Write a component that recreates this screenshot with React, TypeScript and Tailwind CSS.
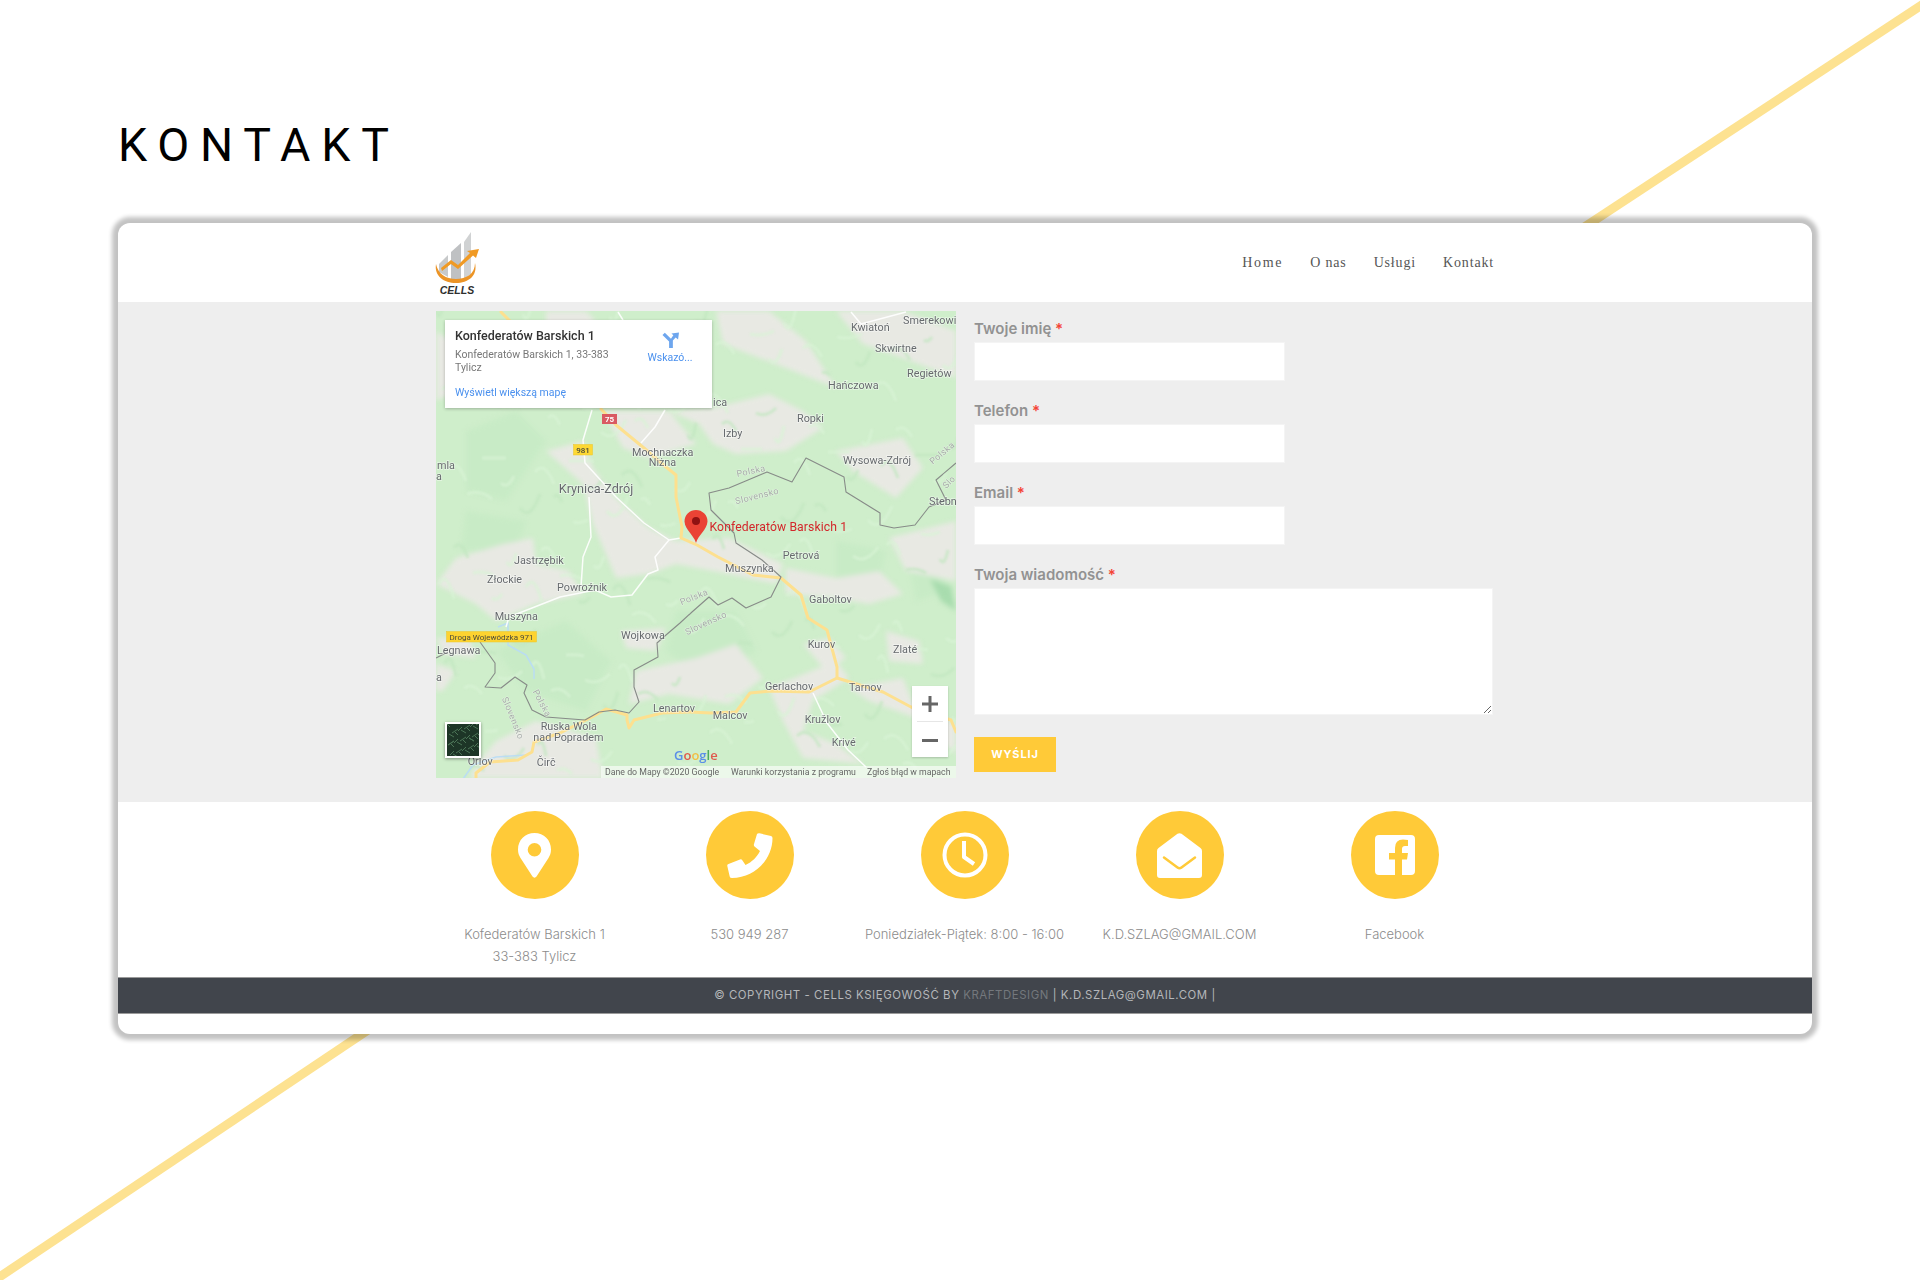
import type { ReactNode } from 'react';

const mont = 'font-["Inter",sans-serif]';

// map labels: text, x, y (centre line), size
const labels: [string, number, number, number?][] = [
  ['Smerekowi', 467, 8],
  ['Kwiatoń', 415, 15.7],
  ['Skwirtne', 439, 36],
  ['Regietów', 471, 61.7],
  ['Hańczowa', 392, 73],
  ['Ropki', 361, 106.7],
  ['Izby', 287, 121],
  ['ica', 277, 90.7],
  ['Wysowa-Zdrój', 407, 148],
  ['Mochnaczka', 196, 140],
  ['Niżna', 212.7, 150.7],
  ['mla', 1, 153],
  ['a', 0, 164],
  ['Krynica-Zdrój', 122.7, 176.7, 12.7],
  ['Stebn', 493, 189],
  ['Jastrzębik', 78, 248],
  ['Złockie', 51, 267.7],
  ['Powroźnik', 121, 275],
  ['Petrová', 346.7, 243],
  ['Muszynka', 289, 256.7],
  ['Gaboltov', 373, 287],
  ['Muszyna', 58.7, 304],
  ['Wojkowa', 185, 323],
  ['Legnawa', 1, 338.7],
  ['Kurov', 371.7, 332],
  ['Zlaté', 457, 337.7],
  ['a', 0, 365],
  ['Gerlachov', 329, 374.7],
  ['Tarnov', 413, 375.7],
  ['Lenartov', 217, 396],
  ['Malcov', 276.7, 403.7],
  ['Kružlov', 368.7, 407],
  ['Ruska Wola', 104.7, 414.3],
  ['nad Popradem', 97.3, 425],
  ['Krivé', 395.7, 430],
  ['Čirč', 100.7, 450],
  ['Orlov', 31.7, 449],
];

// rotated border captions
const borderLabels: [string, number, number, number][] = [
  ['Polska', 315, 159, -12],
  ['Slovensko', 321, 184, -14],
  ['Polska', 506, 141, -40],
  ['Slo', 513, 170, -45],
  ['Polska', 258, 285, -22],
  ['Slovensko', 270, 311, -25],
  ['Polska', 106, 391, 62],
  ['Slovensko', 77, 406, 68],
];

const greyPatches = [
  '277,97 333,83 367,100 387,117 350,140 300,143 277,133 263,113 233,100',
  '167,100 233,100 260,133 213,147 187,137',
  '110,140 147,130 157,157 180,187 213,217 240,230 293,227 347,253 340,273 293,263 240,253 213,263 180,267 157,213 147,173',
  '0,273 20,247 67,233 97,227 100,253 133,260 147,283 100,293 60,310 40,293',
  '350,257 400,267 443,260 467,283 433,293 400,287 350,283',
  '400,140 467,127 487,157 460,187 417,160',
  '400,0 467,0 520,20 520,67 467,47 427,33',
  '200,360 260,347 300,333 327,367 293,393 233,383 193,393',
  '333,377 400,350 413,367 377,390 367,420 400,433 427,453 367,447 347,410',
  '43,450 60,430 100,410 160,427 167,467 33,467',
  '367,333 393,327 410,347 390,360',
  '185,320 230,317 220,340 190,337',
  '450,320 483,330 487,353 453,350',
  '0,353 20,360 7,380 0,380',
  '0,327 33,327 40,347 7,343',
  '413,377 467,367 477,393 520,413 520,443 480,407 433,390',
  '280,0 333,0 370,30 400,77 350,57 287,33',
  '453,227 520,210 520,270 470,260',
  '0,20 30,40 20,80 0,90',
  '110,30 160,10 150,0 110,0',
];

const greenPatches = [
  '30,120 80,100 110,130 70,190 30,180',
  '60,340 130,310 175,350 150,400 90,380',
  '240,300 300,300 320,340 270,370 230,340',
  '470,240 500,220 510,280 480,290',
  '400,230 450,240 440,290 400,290',
  '30,200 90,210 80,240 25,240',
];

// fake terrain streaks so the hills don't read as flat blobs
const ridges = Array.from({ length: 150 }, (_, i) => {
  const x = (i * 137) % 520;
  const y = (i * 211) % 467;
  const dx = 8 + ((i * 7) % 18);
  const dy = ((i * 13) % 31) - 15;
  return { d: `M${x} ${y} q${dx / 2} ${-dy} ${dx} ${dy}`, light: i % 3 !== 0 };
});

const thumbStrokes = Array.from({ length: 36 }, (_, i) => {
  const x = (i * 11) % 32;
  const y = (i * 7) % 32;
  return `M${x} ${y} l${3 + (i % 4)} ${i % 2 ? -4 : 3}`;
}).join(' ');

function MapCanvas() {
  return (
    <svg viewBox="0 0 520 467" className="absolute inset-0 h-full w-full">
      <rect width="520" height="467" fill="#cfeecb" />
      <g className="blur-[2.5px]">
        {greenPatches.map((p, i) => (
          <polygon key={i} points={p} fill="#c8ebc6" />
        ))}
        {greyPatches.map((p, i) => (
          <polygon key={i} points={p} fill="#e8e9e3" />
        ))}
        <path d="M494 268 L515 275 L520 300 L505 290Z" fill="#a8dcae" />
      </g>
      <g fill="none" strokeWidth="3" className="blur-[1px]">
        {ridges.map((r, i) => (
          <path key={i} d={r.d} stroke={r.light ? '#d9f3d5' : '#c2e7c0'} opacity="0.7" />
        ))}
      </g>
      <g className="blur-[0.4px]" transform="translate(0 1)">
        {/* rivers */}
        <g fill="none" stroke="#b9dcf5" strokeWidth="1.6" opacity="0.9" strokeLinejoin="round">
          <path d="M62 315 L72 311 L72 333 L90 343 L98 357 L98 367" />
          <path d="M27 467 L37 453 L60 445 L90 443" />
        </g>
        {/* minor roads */}
        <g fill="none" stroke="#ffffff" strokeWidth="1.5" strokeLinejoin="round" opacity="0.9">
          <path d="M156 98 L147 128 L149 151 L180 185 L208 211 L233 228 L245 226" />
          <path d="M229 98 L219 115 L205 131" />
          <path d="M233 228 L219 245 L222 258 L212 262 L196 283 L175 285 L159 278 L124 285 L96 296 L73 305 L70 315" />
          <path d="M153 185 L155 225 L147 245 L145 275" />
          <path d="M377 381 L391 411 L412 438 L430 455" />
          <path d="M182 0 L187 8 M415 0 L425 12 L470 0" />
        </g>
        {/* main roads */}
        <g fill="none" stroke="#fde08f" strokeWidth="3" strokeLinejoin="round" strokeLinecap="round">
          <path d="M65 0 L75 10" />
          <path d="M165 97 L180 113 L208 136 L230 155 L240 163 L240 185 L246 215 L245 226 L261 233 L282 245 L317 263 L345 266 L365 283 L372 306 L391 318 L401 355 L401 366 L373 380 L335 379 L314 381 L300 400 L275 401 L254 400 L226 401 L198 408 L193 416 L191 408 L191 403 L170 397 L156 405 L124 421 L98 430 L96 440 L82 448 L54 450 L40 461 L40 467" />
          <path d="M401 366 L447 380 L475 395 L515 408 L520 420" />
        </g>
        {/* country border */}
        <g fill="none" stroke="#878b88" strokeWidth="1.1" strokeLinejoin="round">
          <path d="M520 151 L500 168 L510 188 L493 195 L479 213 L458 216 L444 213 L444 201 L410 180 L408 165 L370 146 L356 170 L331 160 L293 176 L273 181 L275 198 L298 221 L300 231 L326 248 L345 265 L335 285 L310 296 L296 286 L282 293 L273 285 L256 300 L244 311 L230 323 L221 331 L222 345 L198 358 L198 375 L203 390 L193 401 L179 398 L163 400 L149 408 L110 405 L96 398 L88 381 L91 373 L79 365 L65 376 L49 375 L59 361 L59 351 L44 330" />
          <path d="M0 346 L12 340" />
        </g>

        {labels.map(([t, x, y, size], i) => (
          <text
            key={i}
            x={x}
            y={y}
            dominantBaseline="central"
            fontSize={size ?? 10.8}
            fill="#666a6d"
            stroke="#ffffff"
            strokeOpacity="0.5"
            strokeWidth="1.5"
            paintOrder="stroke"
            className='font-["Roboto",sans-serif]'
          >
            {t}
          </text>
        ))}
        {borderLabels.map(([t, x, y, r], i) => (
          <text
            key={i}
            x={x}
            y={y}
            textAnchor="middle"
            dominantBaseline="central"
            fontSize="9"
            letterSpacing="0.4"
            fill="#a6aba8"
            stroke="#ffffff"
            strokeOpacity="0.4"
            strokeWidth="1"
            paintOrder="stroke"
            transform={`rotate(${r} ${x} ${y})`}
            className='font-["Roboto",sans-serif]'
          >
            {t}
          </text>
        ))}

        {/* road shields */}
        <rect x="166" y="102" width="15" height="10" fill="#d95a62" />
        <text x="173.5" y="107.3" textAnchor="middle" dominantBaseline="central" fontSize="8" fontWeight="700" fill="#fff" className='font-["Roboto",sans-serif]'>
          75
        </text>
        <rect x="137.5" y="132.500" width="19" height="10.500" fill="#fdd835" stroke="#ecc52b" strokeWidth="0.5" />
        <text x="147" y="138" textAnchor="middle" dominantBaseline="central" fontSize="8" fontWeight="500" fill="#4b4b3a" className='font-["Roboto",sans-serif]'>
          981
        </text>
        <rect x="10.500" y="319.500" width="90" height="10.500" fill="#fdd32f" stroke="#ecc52b" strokeWidth="0.5" />
        <text x="55.500" y="325" textAnchor="middle" dominantBaseline="central" fontSize="8" fill="#4b4b3a" className='font-["Roboto",sans-serif]'>
          Droga Wojewódzka 971
        </text>

        {/* marker */}
        <path
          d="M260 231 C258 223 249 218 248.500 209.500 A11.500 11.500 0 1 1 271.500 209.500 C271 218 262 223 260 231Z"
          fill="#ea4335"
        />
        <circle cx="260" cy="209" r="4" fill="#8f1212" />
        <text x="273.500" y="215" dominantBaseline="central" fontSize="12.2" letterSpacing="0.1" fill="#d3272b" className='font-["Roboto",sans-serif]'>
          Konfederatów Barskich 1
        </text>

        {/* google mark */}
        <text x="238" y="448" fontSize="13" fontWeight="600" className='font-["Open_Sans",sans-serif]'>
          <tspan fill="#5a8ee8">G</tspan>
          <tspan fill="#e0584c">o</tspan>
          <tspan fill="#f2bd42">o</tspan>
          <tspan fill="#5a8ee8">g</tspan>
          <tspan fill="#4eab5e">l</tspan>
          <tspan fill="#e0584c">e</tspan>
        </text>
      </g>
    </svg>
  );
}

function InfoWindow() {
  return (
    <div className='absolute left-[9px] top-[9px] flex h-[88px] w-[267px] justify-between bg-white pl-[10px] pr-[20px] pt-[8px] font-["Roboto",sans-serif] shadow-[0_1px_3px_rgba(0,0,0,0.25)]'>
      <div className="w-[175px]">
        <div className="text-[12.5px] font-medium leading-[16px] text-[#333333]">Konfederatów Barskich 1</div>
        <div className="mt-[5px] whitespace-nowrap text-[10.500px] leading-[12.500px] text-[#777777]">
          Konfederatów Barskich 1, 33-383
          <br />
          Tylicz
        </div>
        <div className="mt-[12px] text-[10.500px] leading-[14px] text-[#4a90ee]">Wyświetl większą mapę</div>
      </div>
      <div className="flex w-[44px] flex-col items-center">
        <svg viewBox="0 0 18 18" className="mt-[4px] h-[17px] w-[17px]" fill="#6ea6ee">
          <path d="M18 0.500 L17 8 L14.500 5.700 L11.500 9 L11.500 17 L7.500 17 L7.500 10 L0.500 3.200 L3 0.800 L9.500 7.200 L12 3.500 L10 1.500Z" />
        </svg>
        <div className="mt-[2px] whitespace-nowrap text-[10.500px] leading-[14px] text-[#4a90ee]">Wskazó...</div>
      </div>
    </div>
  );
}

function MapEmbed() {
  return (
    <div className="relative h-[467px] w-[520px] shrink-0 overflow-hidden">
      <MapCanvas />
      <InfoWindow />
      {/* satellite thumbnail */}
      <div className="absolute left-[9px] top-[411px] h-[36px] w-[36px] border-2 border-white bg-[#1d3527] shadow-[0_1px_3px_rgba(0,0,0,0.4)]">
        <svg viewBox="0 0 32 32" className="h-full w-full blur-[0.4px]" stroke="#4c7557" strokeWidth="1" fill="none">
          <path d={thumbStrokes} />
        </svg>
      </div>
      {/* zoom control */}
      <div className="absolute left-[476px] top-[375px] flex h-[71px] w-[36px] flex-col items-center bg-white shadow-[0_1px_2px_rgba(0,0,0,0.2)]">
        <svg viewBox="0 0 16 16" className="mt-[10px] h-[16px] w-[16px]" fill="#666666">
          <path d="M6.500 0h3v6.500H16v3H9.500V16h-3V9.500H0v-3h6.500z" />
        </svg>
        <div className="mt-[9px] h-px w-[26px] bg-[#e6e6e6]" />
        <div className="mt-[17px] h-[3px] w-[16px] bg-[#666666]" />
      </div>
      {/* attribution */}
      <div className='absolute bottom-0 left-[165px] right-0 flex h-[12px] items-center whitespace-nowrap bg-white/60 pl-[4px] font-["Roboto",sans-serif] text-[8.750px] leading-[12px] text-[#666666]'>
        <span className="w-[126px]">Dane do Mapy ©2020 Google</span>
        <span className="w-[136px]">Warunki korzystania z programu</span>
        <span>Zgłoś błąd w mapach</span>
      </div>
    </div>
  );
}

function Field({ label, className, children }: { label: string; className?: string; children: ReactNode }) {
  return (
    <div className={className}>
      <label className={`mb-[3px] block h-[22px] ${mont} text-[15px] font-semibold leading-[24px] text-[#929292]`}>
        {label} <span className="text-[#f44336]">*</span>
      </label>
      {children}
    </div>
  );
}

function ContactForm() {
  return (
    <form className="ml-[18px] flex-1 pt-[6px]">
      {['Twoje imię', 'Telefon', 'Email'].map((label) => (
        <Field key={label} label={label} className="mb-[18px]">
          <input type="text" className="block h-[39px] w-[311px] border border-[#f4f4f4] bg-white" />
        </Field>
      ))}
      <Field label="Twoja wiadomość">
        <textarea className="block h-[127px] w-[519px] border border-[#f4f4f4] bg-white" />
      </Field>
      <button
        type="button"
        className={`mt-[22px] block h-[35px] w-[82px] bg-[#ffca38] ${mont} text-[11px] font-bold tracking-[0.08em] text-white`}
      >
        WYŚLIJ
      </button>
    </form>
  );
}

function CellsLogo() {
  return (
    <svg viewBox="0 0 50 66" className="ml-[-2px] h-[66px] w-[50px]">
      <path d="M5 34 L14 25 L14 47 L5 42Z" fill="#c7c9ca" />
      <path d="M17 22 L27 13 L27 50 L17 49Z" fill="#bfc1c3" />
      <path d="M30 12 L37 2 L37 44 L30 49Z" fill="#d0d2d3" />
      <path
        d="M2 34 C0 46 10 53 22 53 C34 53 44 46 41 33 C41 44 32 49 22 49 C12 49 4 44 2 34Z"
        fill="#ec9426"
      />
      <path d="M7 38 L17 30 L24 35 L36 23 L33 21 L45 19 L42 28 L39 25.500 L24 39 L17 34 L8 41Z" fill="#f09a24" />
      <text x="23" y="64" textAnchor="middle" fontSize="10.500" fontStyle="italic" fontWeight="700" fill="#2f2f2f" className='font-["Liberation_Sans",sans-serif]'>
        CELLS
      </text>
    </svg>
  );
}

const contactIcons = {
  pin: (
    <svg viewBox="0 0 33 45" className="h-[45px] w-[33px]">
      <path
        fillRule="evenodd"
        fill="#ffffff"
        d="M16.500 0 C26 0 33 7 33 16.500 C33 20 32 22.500 30.500 25 L18.500 43.500 C17.500 45 15.500 45 14.500 43.500 L2.500 25 C1 22.500 0 20 0 16.500 C0 7 7 0 16.500 0Z M16.500 10 A6.800 6.800 0 1 0 16.500 23.600 A6.800 6.800 0 1 0 16.500 10Z"
      />
    </svg>
  ),
  phone: (
    <svg viewBox="0 0 46 45" className="h-[45px] w-[46px]" fill="#ffffff">
      <path d="M30 1 Q31 0 32.500 0.300 L44 3 Q45.500 3.400 45.500 5 C45.500 27 27 45 5 45 Q3 45 2.700 43.500 L0.300 33 Q0 31.500 1.500 31 L13 26.500 Q14.500 26 15.300 27.300 L18.500 32 C25 29 30 24 33 18 L27.500 13.500 Q26.500 12.500 27 11Z" />
    </svg>
  ),
  clock: (
    <svg viewBox="0 0 46 46" className="h-[46px] w-[46px]" fill="none" stroke="#ffffff" strokeWidth="4">
      <circle cx="23" cy="23" r="20.500" />
      <path d="M22 9 L22 25 L32 32" strokeLinejoin="round" />
    </svg>
  ),
  mail: (
    <svg viewBox="0 0 45 45" className="h-[45px] w-[45px]">
      <path
        fill="#ffffff"
        d="M20.500 0.800 Q22.500 -0.500 24.500 0.800 L43.500 15 Q45 16 45 18 L45 42 Q45 45 42 45 L3 45 Q0 45 0 42 L0 18 Q0 16 1.500 15Z"
      />
      <path d="M7 24.500 L20.500 34.500 Q22.500 36 24.500 34.500 L38 24.500" fill="none" stroke="#ffca38" strokeWidth="2.500" strokeLinecap="round" />
    </svg>
  ),
  facebook: (
    <svg viewBox="0 0 40 40" className="h-[40px] w-[40px]">
      <path
        fill="#ffffff"
        d="M4 0 H36 Q40 0 40 4 V36 Q40 40 36 40 H27 V24.500 H32 L33 18 H27 V14 Q27 11 30 11 H33 V5 Q30.500 4.500 28 4.500 Q20 4.500 20 13 V18 H14 V24.500 H20 V40 H4 Q0 40 0 36 V4 Q0 0 4 0Z"
      />
    </svg>
  ),
};

const contacts = [
  { icon: contactIcons.pin, lines: ['Kofederatów Barskich 1', '33-383 Tylicz'] },
  { icon: contactIcons.phone, lines: ['530 949 287'] },
  { icon: contactIcons.clock, lines: ['Poniedziałek-Piątek: 8:00 - 16:00'] },
  { icon: contactIcons.mail, lines: ['K.D.SZLAG@GMAIL.COM'] },
  { icon: contactIcons.facebook, lines: ['Facebook'] },
];

export default function App() {
  return (
    <div className="relative h-[1280px] w-full overflow-hidden bg-white">
      {/* decorative diagonals behind the card */}
      <svg viewBox="0 0 1920 1280" className="absolute inset-0 h-full w-full">
        <line x1="1557" y1="245" x2="1937" y2="-5" stroke="#fde291" strokeWidth="9" />
        <line x1="383" y1="1020" x2="-17" y2="1288" stroke="#fde291" strokeWidth="9" />
      </svg>

      <div className="relative pt-[117px]">
        <h1 className='pl-[118px] font-["Roboto",sans-serif] text-[46.500px] font-normal leading-[57px] tracking-[0.232em] text-black'>
          KONTAKT
        </h1>

        <div className="ml-[118px] mt-[49px] h-[811px] w-[1694px] rounded-[12px] bg-white shadow-[0_0_4px_6px_rgba(0,0,0,0.24)]">
          <header className="ml-[318px] flex h-[79px] w-[1058px] items-center justify-between">
            <CellsLogo />
            <nav className='flex gap-[27px] font-["Liberation_Serif",serif] text-[14px] tracking-[0.06em] text-[#555555]'>
              <a className="tracking-[0.12em]">Home</a>
              <a>O nas</a>
              <a>Usługi</a>
              <a>Kontakt</a>
            </nav>
          </header>

          <section className="h-[500px] bg-[#eeeeee] pt-[9px]">
            <div className="ml-[318px] flex w-[1057px]">
              <MapEmbed />
              <ContactForm />
            </div>
          </section>

          <section className="h-[175px] pt-[9px]">
            <div className="ml-[309px] grid w-[1075px] grid-cols-5">
              {contacts.map(({ icon, lines }) => (
                <div key={lines[0]} className="flex flex-col items-center">
                  <div className="flex h-[88px] w-[88px] items-center justify-center rounded-full bg-[#ffca38]">{icon}</div>
                  <div className={`mt-[24px] text-center ${mont} text-[13px] font-light leading-[22px] text-[#8c8c8c]`}>
                    {lines.map((line) => (
                      <div key={line}>{line}</div>
                    ))}
                  </div>
                </div>
              ))}
            </div>
          </section>

          <footer className={`flex h-[37px] items-center justify-center border-y border-[#9a9a9a] bg-[#41454c] ${mont} text-[11.400px] tracking-[0.05em] text-[#b5b7ba]`}>
            <span>
              © COPYRIGHT - CELLS KSIĘGOWOŚĆ BY <span className="text-[#74787d]">KRAFTDESIGN</span> | K.D.SZLAG@GMAIL.COM |
            </span>
          </footer>
        </div>
      </div>
    </div>
  );
}
